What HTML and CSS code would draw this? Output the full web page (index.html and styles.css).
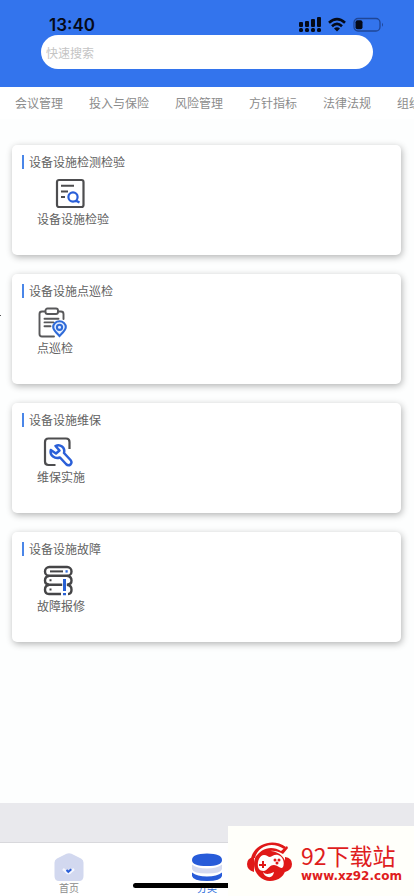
FILE: index.html
```html
<!DOCTYPE html>
<html lang="zh-CN">
<head>
<meta charset="utf-8">
<meta name="viewport" content="width=device-width, initial-scale=1">
<title>分类</title>
<link rel="stylesheet" href="styles.css">
</head>
<body>
<div class="app">
  <header class="header">
    <div class="status">
      <span class="time">13:40</span>
      <div class="status-icons">
        <svg width="22" height="16" viewBox="0 0 22 16" fill="#050a18">
          <rect x="0" y="5" width="4" height="5" rx="1"/><rect x="6" y="4" width="4" height="6" rx="1"/><rect x="12" y="2" width="4" height="8" rx="1"/><rect x="18" y="0" width="4" height="10" rx="1"/>
          <rect x="0" y="11" width="4" height="4" rx="1.5"/><rect x="6" y="11" width="4" height="4" rx="1.5"/><rect x="12" y="11" width="4" height="4" rx="1.5"/><rect x="18" y="11" width="4" height="4" rx="1.5"/>
        </svg>
        <svg width="18" height="16" viewBox="0 0 18 16" fill="none" stroke="#050a18" stroke-width="2.6">
          <path d="M1 5.8Q9-1.6 17 5.8M4 9.2Q9 4.6 14 9.2"/><path d="M6 11.4Q9 9 12 11.4L9 14.4Z" fill="#050a18" stroke="none"/>
        </svg>
        <svg width="31" height="16" viewBox="0 0 31 16">
          <rect x="1" y="1.5" width="26" height="12.5" rx="4" fill="none" stroke="#1f4697" stroke-width="1.3"/><rect x="2.5" y="3.2" width="7" height="9" rx="2" fill="#050a18"/><path d="M29 5.8q2 2 0 4Z" fill="#1f4697"/>
        </svg>
      </div>
    </div>
    <input class="search" type="search" placeholder="快速搜索" aria-label="快速搜索">
  </header>
  <nav class="tabs">
    <a href="#">会议管理</a><a href="#">投入与保险</a><a href="#">风险管理</a><a href="#">方针指标</a><a href="#">法律法规</a><a href="#">组织机构</a>
  </nav>
  <main class="content">
    <span class="edge-mark"></span>
    <section class="card">
      <h2>设备设施检测检验</h2>
      <a class="entry" href="#">
        <svg width="36" height="33" viewBox="0 0 36 33" fill="none" stroke="#4d4d4f" stroke-width="2">
          <rect x="2" y="2" width="26.500" height="27" rx="2" stroke-width="2.2"/>
          <path d="M6 7.800h13M6 13.500h7M6 19h4"/>
          <g stroke="#2a5fd8" stroke-width="2.200"><circle cx="18" cy="19" r="4.600"/><path d="M20 23.200h2l2.500 1.300"/></g>
        </svg>
        <span>设备设施检验</span>
      </a>
    </section>
    <section class="card">
      <h2>设备设施点巡检</h2>
      <a class="entry" href="#">
        <svg width="36" height="33" viewBox="0 0 36 33" fill="none" stroke="#58585a" stroke-width="1.900" stroke-linecap="round">
          <path d="M8 4.500H5Q2.500 4.500 2.500 7V27Q2.500 29.500 5 29.500H17M21 4.500h3Q26.500 4.500 26.500 7V12"/>
          <rect x="8.500" y="1.500" width="12.500" height="5.500" rx="2"/>
          <path d="M7.500 11.700h14M7.500 15.400h9M7.500 19.300h6"/>
          <g stroke="#2f6bd8" stroke-width="2.100"><path d="M22.500 29c-3.200-3.300-6.300-5.700-6.300-8.900a6.300 5.900 0 0 1 12.600 0c0 3.200-3.100 5.600-6.300 8.900Z" fill="#e6efff"/><circle cx="22.500" cy="20.300" r="2.600"/></g>
        </svg>
        <span>点巡检</span>
      </a>
    </section>
    <section class="card">
      <h2>设备设施维保</h2>
      <a class="entry" href="#">
        <svg width="36" height="33" viewBox="0 0 36 33" fill="none" stroke="#4d4d4f" stroke-width="2.200">
          <path d="M12.500 29H5.500Q2 29 2 25.500V6Q2 2.500 5.500 2.500H23Q26.500 2.500 26.500 6V13"/>
          <path d="M12.500 10C17 7.500 22.500 11.500 21 17L27.500 24C30.500 27.500 26 31 23 28L17 21.500C12 23.500 6.500 19.500 7.800 14L13 17.500L16.500 14.500Z" stroke="#2a5fd8" stroke-width="2.500" stroke-linejoin="round"/>
        </svg>
        <span>维保实施</span>
      </a>
    </section>
    <section class="card">
      <h2>设备设施故障</h2>
      <a class="entry" href="#">
        <svg width="36" height="33" viewBox="0 0 36 33" fill="none" stroke="#454547" stroke-width="2.400">
          <rect x="2" y="2" width="26.500" height="8.800" rx="4.400"/>
          <path d="M6 11Q2 11.500 2 15.500T6 19.500M24.500 11Q28.500 11.500 28.500 15.500T24.500 19.500M6 20Q2 20.500 2 24.700T6 29H18M24.500 20Q28.500 20.500 28.500 24.700T25 29M6 19.700H25"/>
          <path d="M7 6.400h13" stroke-width="2"/><path d="M22.500 6.400h2.200" stroke="#2f6bd8"/>
          <path d="M6.500 15.300h2M6.500 24.500h2" stroke-width="2"/>
          <path d="M21.500 14v17" stroke="#fff" stroke-width="4.600"/>
          <path d="M21.500 14v12M21.500 28v2.300" stroke="#2860d4" stroke-width="3"/>
        </svg>
        <span>故障报修</span>
      </a>
    </section>
  </main>
  <div class="spacer"></div>
  <footer class="tabbar">
    <button type="button">
      <svg width="30" height="30" viewBox="0 0 30 30">
        <path d="M12.500 1.800Q15 .500 17.500 1.800L27 6.500Q29.500 8 29.500 10.500V24Q29.500 29 25 29H5Q.500 29 .500 24V10.500Q.500 8 3 6.500Z" fill="#d2d8ef"/>
        <path d="M9 17l4.500 4h2l4.500-4" fill="none" stroke="#f5f7ff" stroke-width="2.500"/><path d="M12.500 18l1.800 1.800 3-2.600" fill="none" stroke="#2a5fd8" stroke-width="2"/>
      </svg>
      <span>首页</span>
    </button>
    <button type="button" class="active">
      <svg width="30" height="30" viewBox="0 0 30 30">
        <path d="M0 8q0-6.500 15-6.500T30 8q0 6-15 6T0 8Z" fill="#275bd9"/>
        <path d="M0 12.500q5 4 15 4t15-4V17q-1 4.500-15 4.500T0 17Z" fill="#d5daf0"/>
        <path d="M0 20.500q5 4 15 4t15-4V24q-1 5-15 5T0 24Z" fill="#275bd9"/>
      </svg>
      <span>分类</span>
    </button>
  </footer>
  <div class="home-indicator"></div>
  <aside class="badge">
    <svg width="46" height="42" viewBox="0 0 46 42" fill="#e01818">
      <path d="M4 17C6 3 25-5 39 5L37 7C25-1 11 4 8 16Z"/>
      <path d="M9 16C13 6 25 3 34 9L40 4L41 6L36 12C25 6 17 9 13 16Z"/>
      <path d="M7 15Q0 16 0 22t7 8ZM38 15q7 1 7 7t-7 8Z"/>
      <path d="M7 22C7 11 16 8 24 9c9 1 15 7 15 15 0 10-8 15-16 15S7 32 7 22Z"/>
      <path d="M11 25C10 19 13 13 17 13c3 0 4 2 6 2s4-3 8-2c5 1 7 8 5 12-2 3-5-2-9-2-5 0-6 5-10 6-3 0-5-1-6-4Z" fill="#fff"/>
      <path d="M16 19v7M12 23h7" stroke="#e01818" stroke-width="2"/><circle cx="28" cy="18" r="1.500"/><circle cx="32" cy="18" r="1.500"/><circle cx="30" cy="21" r="1.500"/>
      <path d="M16 30q3 4 11 0-1 6-6 5-4-1-5-5Z" fill="#fff"/>
    </svg>
    <div class="badge-text"><strong>92下载站</strong><span>www.xz92.com</span></div>
  </aside>
</div>
</body>
</html>
```
FILE: styles.css
```css
* {
  box-sizing: border-box;
}

body {
  margin: 0;
  background: #fdfefe;
  color: #626262;
  font: 12px/16px "Noto Sans CJK SC", sans-serif;
}

a {
  color: inherit;
  text-decoration: none;
}

.app {
  position: relative;
  display: flex;
  flex-direction: column;
  min-height: 100vh;
  overflow: hidden;
}

.header {
  padding: 15px 30px 18px 41px;
  background: #3374ed;
}

.status {
  display: flex;
  justify-content: space-between;
  align-items: center;
  height: 20px;
  padding-left: 8px;
}

.time {
  color: #050a18;
  font: 600 17px/20px Inter, sans-serif;
}

.status-icons {
  display: flex;
  gap: 7px;
}

.search {
  display: block;
  width: calc(100% - 11px);
  height: 34px;
  padding: 0 5px;
  border: 0;
  border-radius: 17px;
  outline: 0;
  background: #fff;
  font: inherit;
  appearance: none;
}

.search::placeholder {
  color: #c4c4c4;
}

.tabs {
  display: flex;
  gap: 26px;
  padding: 8px 15px;
  overflow: hidden;
  background: #fff;
  color: #8c8c8c;
  white-space: nowrap;
}

.content {
  position: relative;
  display: flex;
  flex: 1;
  flex-direction: column;
  gap: 19px;
  padding: 26px 13px 0 12px;
}

.edge-mark {
  position: absolute;
  top: 196px;
  left: 0;
  width: 1px;
  height: 1px;
  background: #555;
}

.card {
  min-height: 110px;
  padding: 9px 10px;
  border-radius: 5px;
  background: #fff;
  box-shadow: 1px 2px 7px rgba(0, 0, 0, 0.3);
}

.card h2 {
  display: flex;
  align-items: center;
  gap: 5px;
  margin: 0;
  font-size: 12px;
  font-weight: 400;
}

.card h2::before {
  width: 2px;
  height: 14px;
  background: #4a86e8;
  content: "";
}

.entry {
  display: inline-flex;
  flex-direction: column;
  align-items: center;
  margin: 8px 0 0 15px;
}

.spacer {
  height: 39px;
  background: #e9e9ed;
}

.tabbar {
  display: grid;
  grid-template-columns: repeat(3, 1fr);
  height: 54px;
  border-top: 1px solid #d8d8dc;
  background: #fff;
}

.tabbar button {
  display: flex;
  flex-direction: column;
  align-items: center;
  padding: 9px 0 0;
  border: 0;
  background: none;
  color: #8c8c8c;
  font: 10px/12px "Noto Sans CJK SC", sans-serif;
}

.tabbar .active {
  color: #2a6bdc;
}

.home-indicator {
  position: absolute;
  bottom: 8px;
  left: 50%;
  width: 148px;
  height: 5px;
  border-radius: 3px;
  background: #000;
  transform: translateX(-50%);
}

.badge {
  position: absolute;
  right: 0;
  bottom: 0;
  display: flex;
  gap: 8px;
  width: 186px;
  height: 70px;
  padding: 16px 0 0 19px;
  background: #fffffa;
  color: #df1d1d;
}

.badge-text {
  display: flex;
  flex-direction: column;
}

.badge-text strong {
  font-size: 23px;
  font-weight: 400;
  line-height: 27px;
}

.badge-text span {
  font: 700 12px/14px "DejaVu Sans", sans-serif;
}
```
